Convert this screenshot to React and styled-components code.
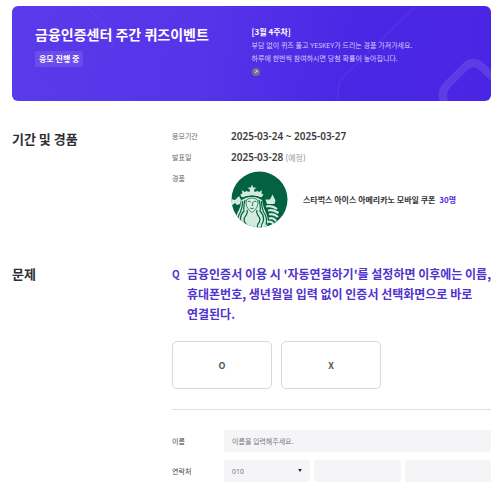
import React, { useState } from 'react';
import styled, { createGlobalStyle } from 'styled-components';

const GlobalStyle = createGlobalStyle`
  * {
    box-sizing: border-box;
  }
  body {
    margin: 0;
    background: #ffffff;
    color: #333333;
    font-family: 'Noto Sans CJK KR', 'Noto Sans', sans-serif;
    word-break: keep-all;
  }
`;

const Page = styled.main`
  padding: 6px 9px 16px 12px;
`;

const Banner = styled.header`
  position: relative;
  overflow: hidden;
  display: grid;
  grid-template-columns: 216fr 216fr;
  min-height: 95px;
  padding: 18px 23px;
  border-radius: 6px;
  background: linear-gradient(100deg, #5a3aea 0%, #5634e9 40%, #4a27e5 70%, #4a25e4 100%);
  color: #ffffff;
`;

const BannerPattern = styled.svg`
  position: absolute;
  right: 0;
  bottom: 0;
  width: 100%;
  height: 100%;
`;

const BannerColumn = styled.div`
  position: relative;
  white-space: nowrap;
`;

const BannerTitle = styled.h1`
  margin: 0;
  font-size: 14px;
  line-height: 20px;
  font-weight: 700;
`;

const Badge = styled.span`
  display: block;
  width: fit-content;
  margin-top: 7px;
  padding: 0 4px;
  border-radius: 2px;
  background: rgba(255, 255, 255, 0.1);
  font-size: 8px;
  line-height: 16px;
  font-weight: 700;
`;

const BannerWeek = styled.strong`
  display: block;
  font-size: 8px;
  line-height: 15px;
`;

const BannerText = styled.p`
  margin: 0;
  color: #d3cbfa;
  font-family: 'Noto Sans', 'Noto Sans CJK KR', sans-serif;
  font-size: 7px;
  line-height: 13px;
`;

const BannerIcon = styled.svg`
  display: block;
  width: 8px;
  height: 8px;
  margin-top: 3px;
`;

const Section = styled.section`
  display: grid;
  grid-template-columns: 160px minmax(0, 1fr);
  margin-top: ${props => (props.$spaced ? '36px' : '28px')};
`;

const SectionTitle = styled.h2`
  margin: 0;
  color: #2f2f33;
  font-size: 13px;
  line-height: 20px;
  font-weight: 700;
`;

const InfoList = styled.dl`
  display: grid;
  grid-template-columns: 59px minmax(0, 1fr);
  row-gap: 6px;
  margin: 0;
`;

const InfoLabel = styled.dt`
  color: #666666;
  font-size: 7px;
  line-height: 15px;
`;

const InfoValue = styled.dd`
  margin: 0;
  color: #3c3c40;
  font-family: 'Noto Sans', 'Noto Sans CJK KR', sans-serif;
  font-size: 10px;
  line-height: 15px;
  font-weight: 600;
`;

const Note = styled.span`
  color: #999999;
  font-size: 8px;
  font-weight: 400;
`;

const Prize = styled.div`
  display: flex;
  align-items: center;
  gap: 15px;
  color: #333333;
  font-family: 'Noto Sans CJK KR', sans-serif;
  font-size: 8px;
  font-weight: 700;
`;

const PrizeLogo = styled.svg`
  flex: none;
  width: 57px;
  height: 57px;
`;

const PrizeCount = styled.em`
  margin-left: 2px;
  color: #4f2ee0;
  font-style: normal;
`;

const Question = styled.div`
  display: grid;
  grid-template-columns: 15px minmax(0, 1fr);
  margin-right: -4px;
  color: #5032cf;
  font-size: 12px;
  line-height: 20px;
`;

const QuestionMark = styled.span`
  font-size: 10px;
  font-weight: 700;
`;

const QuestionText = styled.p`
  margin: 0;
  font-weight: 700;
`;

const Answers = styled.div`
  display: flex;
  gap: 9px;
  margin-top: 17px;
`;

const AnswerButton = styled.button`
  width: 100px;
  height: 48px;
  border: 1px solid ${props => (props.$selected ? '#5032cf' : '#d9d9dc')};
  border-radius: 5px;
  background: #ffffff;
  color: #555555;
  font-family: inherit;
  font-size: 9px;
  font-weight: 700;
  cursor: pointer;
`;

const Divider = styled.hr`
  width: 100%;
  margin: 20px 0;
  border: 0;
  border-top: 1px solid #dddddd;
`;

const Form = styled.form`
  display: grid;
  gap: 8px;
`;

const FormRow = styled.div`
  display: grid;
  grid-template-columns: 52px minmax(0, 1fr);
  align-items: center;
`;

const FieldLabel = styled.label`
  color: #444444;
  font-size: 7px;
`;

const TextField = styled.input`
  width: 100%;
  min-width: 0;
  height: 22px;
  padding: 0 8px;
  border: 0;
  border-radius: 3px;
  background: #f5f5f8;
  color: #333333;
  font-family: inherit;
  font-size: 7px;
  &::placeholder {
    color: #777777;
  }
`;

const PhoneFields = styled.div`
  display: grid;
  grid-template-columns: repeat(3, minmax(0, 1fr));
  gap: 4px;
`;

const SelectWrap = styled.div`
  position: relative;
`;

const PhoneSelect = styled.select`
  display: block;
  appearance: none;
  width: 100%;
  height: 22px;
  padding: 0 8px;
  border: 0;
  border-radius: 3px;
  background: #f5f5f8;
  color: #777777;
  font-family: 'Noto Sans', sans-serif;
  font-size: 7px;
`;

const SelectArrow = styled.svg`
  position: absolute;
  top: 9px;
  right: 8px;
  width: 4px;
  height: 3px;
  pointer-events: none;
`;

const Pattern = () => (
  <BannerPattern viewBox="0 0 479 95" preserveAspectRatio="xMaxYMax slice" aria-hidden="true">
    <g fill="none" stroke="#ffffff">
      <path d="M28 -4 L4 32 Q-2 46 6 56 L50 98 M70 -4 L98 24 Q104 34 99 43" strokeOpacity="0.04" />
      <path d="M408 -4 L330 72 Q325 78 326 98" strokeOpacity="0.04" strokeWidth="2" />
      <path
        d="M434 98 Q427 88 435 79 L453 61 Q461 53 470 61 L486 76"
        strokeOpacity="0.11"
        strokeWidth="8"
      />
    </g>
  </BannerPattern>
);

const SirenLogo = () => (
  <PrizeLogo viewBox="0 0 57 57" role="img" aria-label="스타벅스">
    <defs>
      <clipPath id="logo-circle">
        <circle cx="28.5" cy="28.5" r="28" />
      </clipPath>
    </defs>
    <circle cx="28.5" cy="28.5" r="28" fill="#036241" />
    <g clipPath="url(#logo-circle)">
      {/* left tail */}
      <path d="M0 28 L4 29 L8 25 L10 29 L9 33 L6 34 L4 32 L0 35 Z" fill="#d3ebde" />
      {/* crown */}
      <path
        d="M21 13.5 L22.2 16.5 L25.4 16.7 L23 18.7 L23.6 21 L26.6 20 L28 21 L31 19.2 L30.4 22.6 L32.6 23.6 L30.2 26.6 Q21 22.4 11 26.6 L9.2 23.6 L11.4 22.6 L10.8 19.2 L13.8 21 L15.4 20 L18.4 21 L19 18.7 L16.6 16.7 L19.8 16.5 Z"
        fill="#d3ebde"
      />
      {/* hair and face */}
      <path
        d="M10.5 29 Q21 22.5 31 29 Q32 36 35 42 Q39 50 34 60 L7 60 Q2 51 6 43 Q10 36 10.5 29 Z"
        fill="#d3ebde"
      />
      <path d="M11 27.4 Q21 22.8 31 27.4" fill="none" stroke="#036241" strokeWidth="1" />
      <g fill="none" stroke="#036241" strokeWidth="1.2">
        <path d="M14 29 Q12.2 36 13 40 Q8 45 10 51 Q13 55 11 60" />
        <path d="M11.6 30 Q11.5 36 9.5 41 Q5.5 47 7 54" />
        <path d="M16 39 Q17 42 14.5 45 Q11.5 49 15 53 Q16.5 56 15 60" />
        <path d="M28 29 Q30 36 29 40 Q34 45 32 51 Q29 55 31 60" />
        <path d="M30.4 30 Q30.5 36 32.5 41 Q37 47 35 54" />
        <path d="M26 39 Q25 42 27.5 45 Q30.5 49 27 53 Q25.5 56 27 60" />
      </g>
      <path
        d="M15.4 29 Q21 25 26.6 29 Q28.4 36.5 21 41.5 Q13.6 36.5 15.4 29 Z"
        fill="#d9eee3"
        stroke="#036241"
        strokeWidth="0.7"
      />
      <path
        d="M16.8 30.7 Q18.3 29.7 19.8 30.8 M22.4 30.8 Q24 29.7 25.4 30.7 M21.5 31 L21.8 34.5 L20.6 34.5 M19.2 37 Q21 38.4 22.8 37"
        fill="none"
        stroke="#036241"
        strokeWidth="0.8"
      />
      {/* right tail */}
      <path d="M41.5 23.5 L44.5 29.5 L43.5 33 L36 33 L34.5 28.5 L39 28.5 Z" fill="#d3ebde" />
      <path
        d="M35 35.5 Q41 34 46 38 M37 39.5 Q42 38 47.5 42 M38 43.5 Q42.5 42 47 46 M38 47.5 Q42 46 45 50 M36 51 Q40 49.5 43 53"
        fill="none"
        stroke="#d3ebde"
        strokeWidth="2.2"
      />
    </g>
  </PrizeLogo>
);

const App = () => {
  const [answer, setAnswer] = useState('');

  return (
    <>
      <GlobalStyle />
      <Page>
        <Banner>
          <Pattern />
          <BannerColumn>
            <BannerTitle>금융인증센터 주간 퀴즈이벤트</BannerTitle>
            <Badge>응모 진행 중</Badge>
          </BannerColumn>
          <BannerColumn>
            <BannerWeek>[3월 4주차]</BannerWeek>
            <BannerText>부담 없이 퀴즈 풀고 YESKEY가 드리는 경품 가져가세요.</BannerText>
            <BannerText>하루에 한번씩 참여하시면 당첨 확률이 높아집니다.</BannerText>
            <BannerIcon viewBox="0 0 8 8" aria-hidden="true">
              <circle cx="4" cy="4" r="4" fill="#77718a" />
              <path d="M3 5 L5 3 M3.5 2.7 H5.2 V4.5" fill="none" stroke="#d8d0b8" />
            </BannerIcon>
          </BannerColumn>
        </Banner>

        <Section>
          <SectionTitle>기간 및 경품</SectionTitle>
          <InfoList>
            <InfoLabel>응모기간</InfoLabel>
            <InfoValue>2025-03-24 ~ 2025-03-27</InfoValue>
            <InfoLabel>발표일</InfoLabel>
            <InfoValue>
              2025-03-28 <Note>(예정)</Note>
            </InfoValue>
            <InfoLabel>경품</InfoLabel>
            <InfoValue>
              <Prize>
                <SirenLogo />
                <span>
                  스타벅스 아이스 아메리카노 모바일 쿠폰 <PrizeCount>30명</PrizeCount>
                </span>
              </Prize>
            </InfoValue>
          </InfoList>
        </Section>

        <Section $spaced>
          <SectionTitle>문제</SectionTitle>
          <div>
            <Question>
              <QuestionMark>Q</QuestionMark>
              <QuestionText>
                금융인증서 이용 시 '자동연결하기'를 설정하면 이후에는 이름, 휴대폰번호, 생년월일 입력 없이
                인증서 선택화면으로 바로 연결된다.
              </QuestionText>
            </Question>
            <Answers>
              {['O', 'X'].map(value => (
                <AnswerButton
                  key={value}
                  type="button"
                  aria-pressed={answer === value}
                  $selected={answer === value}
                  onClick={() => setAnswer(value)}
                >
                  {value}
                </AnswerButton>
              ))}
            </Answers>
            <Divider />
            <Form onSubmit={e => e.preventDefault()}>
              <FormRow>
                <FieldLabel htmlFor="name">이름</FieldLabel>
                <TextField id="name" type="text" placeholder="이름을 입력해주세요." />
              </FormRow>
              <FormRow>
                <FieldLabel htmlFor="phone1">연락처</FieldLabel>
                <PhoneFields>
                  <SelectWrap>
                    <PhoneSelect id="phone1" defaultValue="010">
                      <option value="010">010</option>
                      <option value="011">011</option>
                      <option value="016">016</option>
                    </PhoneSelect>
                    <SelectArrow viewBox="0 0 5 4" aria-hidden="true">
                      <path d="M0 0 H5 L2.5 4 Z" fill="#222222" />
                    </SelectArrow>
                  </SelectWrap>
                  <TextField type="tel" maxLength={4} aria-label="연락처 가운데 자리" />
                  <TextField type="tel" maxLength={4} aria-label="연락처 끝자리" />
                </PhoneFields>
              </FormRow>
            </Form>
          </div>
        </Section>
      </Page>
    </>
  );
};

export default App;
